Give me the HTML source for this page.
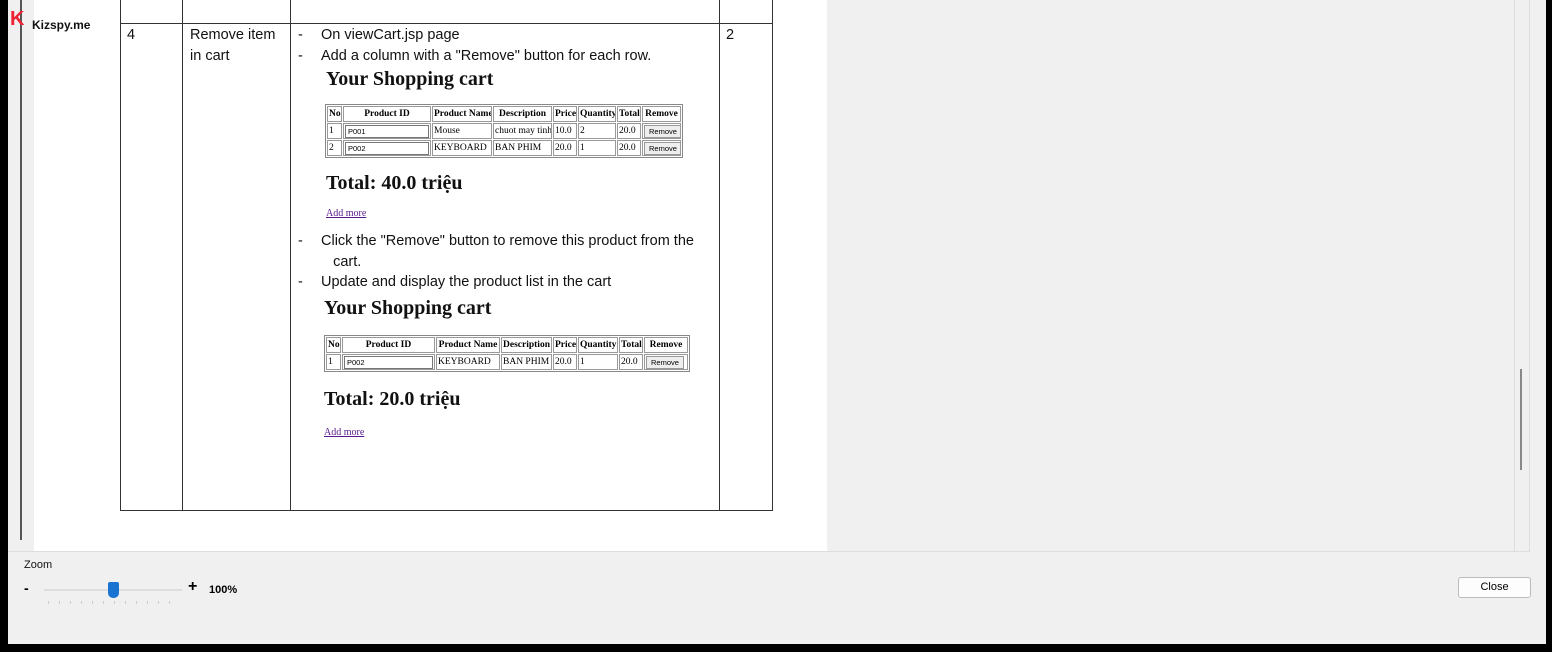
<!DOCTYPE html>
<html><head><meta charset="utf-8"><style>
*{margin:0;padding:0;box-sizing:border-box}
body{width:1552px;height:652px;background:#000;position:relative;overflow:hidden;font-family:"Liberation Sans",sans-serif}
.a{position:absolute}
.cal{font-family:"Liberation Sans",sans-serif;font-size:14.5px;color:#111;line-height:20.5px}
table.c{border-collapse:separate;border:1px solid #888;border-spacing:1px;font-family:"Liberation Serif",serif;font-size:9.5px;background:#fff;table-layout:fixed}
table.c td,table.c th{border:1px solid #999;padding:0 1px;height:16px;white-space:nowrap;overflow:hidden}
table.c th{font-weight:bold}
.inp{display:block;width:100%;height:13px;border:1px solid #777;font-family:"Liberation Sans",sans-serif;font-size:7.5px;padding-left:2px;line-height:11px}
.btn{display:inline-block;border:1px solid #999;background:#eee;font-family:"Liberation Sans",sans-serif;font-size:7.5px;padding:1px 4px}
h2{font-family:"Liberation Serif",serif;font-size:20px;font-weight:bold;color:#111}
.lnk{font-family:"Liberation Serif",serif;font-size:10px;color:#551a8b;text-decoration:underline}
</style></head><body>
<div class="a" style="left:8px;top:0;width:1538px;height:644px;background:#f0f0f0"></div>
<div class="a" style="left:20px;top:0;width:2px;height:540px;background:#555"></div>
<div class="a" style="left:34px;top:0;width:793px;height:551px;background:#fff"></div>
<div class="a" style="left:1529px;top:0;width:1px;height:551px;background:#ddd"></div>
<div class="a" style="left:1514px;top:0;width:1px;height:551px;background:#ddd"></div>
<div class="a" style="left:8px;top:551px;width:1522px;height:1px;background:#ddd"></div>
<div class="a" style="left:1520px;top:369px;width:2px;height:101px;background:#888"></div>
<div class="a" style="left:10px;top:9px;font-weight:900;font-size:20px;color:#e23;line-height:20px">K</div>
<div class="a" style="left:32px;top:18px;font-weight:bold;font-size:12px;color:#111">Kizspy.me</div>
<div class="a" style="left:120px;top:23px;width:653px;height:1px;background:#333"></div>
<div class="a" style="left:120px;top:510px;width:653px;height:1px;background:#333"></div>
<div class="a" style="left:120px;top:0;width:1px;height:511px;background:#333"></div>
<div class="a" style="left:182px;top:0;width:1px;height:511px;background:#333"></div>
<div class="a" style="left:290px;top:0;width:1px;height:511px;background:#333"></div>
<div class="a" style="left:719px;top:0;width:1px;height:511px;background:#333"></div>
<div class="a" style="left:772px;top:0;width:1px;height:511px;background:#333"></div>
<div class="a cal" style="left:127px;top:25px">4</div>
<div class="a cal" style="left:190px;top:25px">Remove item<br>in cart</div>
<div class="a cal" style="left:726px;top:25px">2</div>
<div class="a cal" style="left:298px;top:25px">-<br>-</div>
<div class="a cal" style="left:321px;top:25px">On viewCart.jsp page<br>Add a column with a "Remove" button for each row.</div>
<h2 class="a" style="left:326px;top:68px">Your Shopping cart</h2>
<table class="c a" style="left:325px;top:104px;width:355px">
<colgroup><col style="width:15px"><col style="width:88px"><col style="width:60px"><col style="width:59px"><col style="width:24px"><col style="width:38px"><col style="width:24px"><col style="width:39px"></colgroup>
<tr><th>No</th><th>Product ID</th><th>Product Name</th><th>Description</th><th>Price</th><th>Quantity</th><th>Total</th><th>Remove</th></tr>
<tr><td>1</td><td><span class="inp">P001</span></td><td>Mouse</td><td>chuot may tinh</td><td>10.0</td><td>2</td><td>20.0</td><td><span class="btn">Remove</span></td></tr>
<tr><td>2</td><td><span class="inp">P002</span></td><td>KEYBOARD</td><td>BAN PHIM</td><td>20.0</td><td>1</td><td>20.0</td><td><span class="btn">Remove</span></td></tr>
</table>
<h2 class="a" style="left:326px;top:172px">Total: 40.0 triệu</h2>
<div class="a lnk" style="left:326px;top:208px">Add more</div>
<div class="a cal" style="left:298px;top:231px">-<br><br>-</div>
<div class="a cal" style="left:321px;top:231px">Click the "Remove" button to remove this product from the<br>&nbsp;&nbsp;&nbsp;cart.<br>Update and display the product list in the cart</div>
<h2 class="a" style="left:324px;top:297px">Your Shopping cart</h2>
<table class="c a" style="left:324px;top:335px;width:365px">
<colgroup><col style="width:15px"><col style="width:93px"><col style="width:64px"><col style="width:51px"><col style="width:24px"><col style="width:40px"><col style="width:24px"><col style="width:44px"></colgroup>
<tr><th>No</th><th>Product ID</th><th>Product Name</th><th>Description</th><th>Price</th><th>Quantity</th><th>Total</th><th>Remove</th></tr>
<tr><td>1</td><td><span class="inp">P002</span></td><td>KEYBOARD</td><td>BAN PHIM</td><td>20.0</td><td>1</td><td>20.0</td><td><span class="btn">Remove</span></td></tr>
</table>
<h2 class="a" style="left:324px;top:388px">Total: 20.0 triệu</h2>
<div class="a lnk" style="left:324px;top:427px">Add more</div>
<div class="a" style="left:24px;top:559px;font-size:11px;color:#111">Zoom</div>
<div class="a" style="left:24px;top:580px;font-size:14px;font-weight:bold">-</div>
<div class="a" style="left:44px;top:589px;width:138px;height:2px;background:#ddd"></div>
<div class="a" style="left:108px;top:582px;width:11px;height:16px;background:#1a73d0;border-radius:2px 2px 5px 5px"></div>
<div class="a" style="left:48px;top:601px;width:130px;height:3px;background:repeating-linear-gradient(90deg,#ccc 0 1px,transparent 1px 11px)"></div>
<div class="a" style="left:188px;top:578px;font-size:16px;font-weight:bold">+</div>
<div class="a" style="left:209px;top:584px;font-size:11px;font-weight:bold">100%</div>
<div class="a" style="left:1458px;top:577px;width:73px;height:21px;border:1px solid #bbb;background:#fdfdfd;border-radius:3px;font-size:11px;text-align:center;line-height:19px">Close</div>
</body></html>
